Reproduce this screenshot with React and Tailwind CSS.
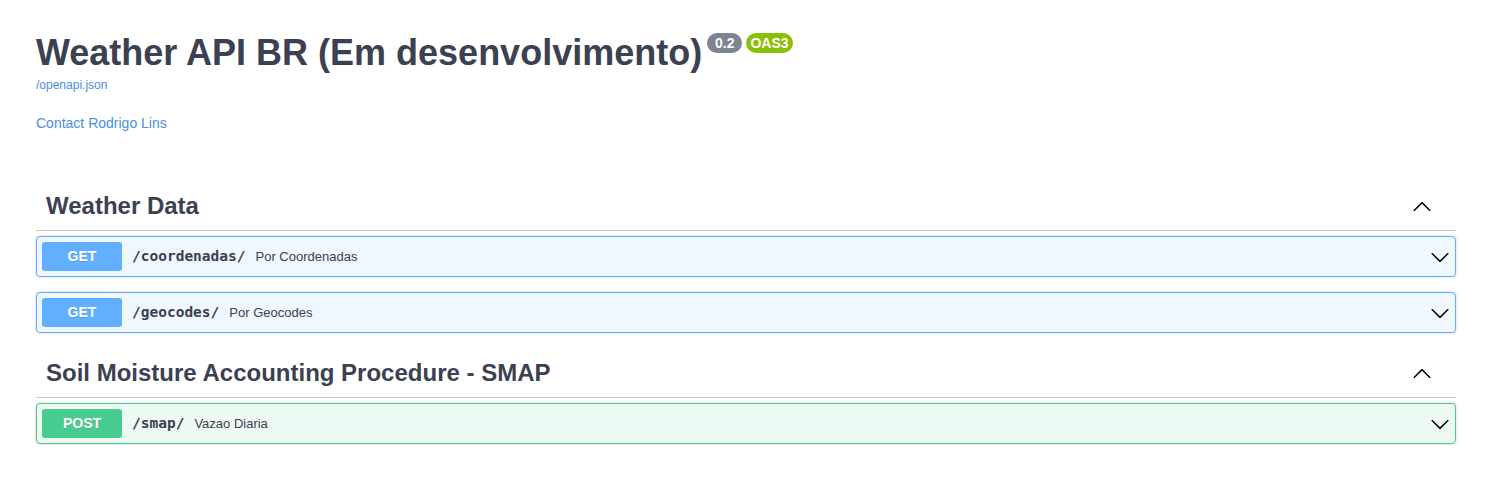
import React from "react";

const ArrowDown = () => (
  <svg width="20" height="20" viewBox="0 0 20 20" className="block" aria-hidden="true">
    <path
      fill="#000"
      d="M17.418 6.109c.272-.268.709-.268.979 0s.271.701 0 .969l-7.908 7.83c-.27.268-.707.268-.979 0l-7.908-7.83c-.27-.268-.27-.701 0-.969.271-.268.709-.268.979 0L10 13.25l7.418-7.141z"
    />
  </svg>
);

const ArrowUp = () => (
  <svg width="20" height="20" viewBox="0 0 20 20" className="block" aria-hidden="true">
    <path
      fill="#000"
      d="M17.418 14.908c.272.268.709.268.979 0s.271-.701 0-.969l-7.908-7.83c-.27-.268-.707-.268-.979 0l-7.908 7.83c-.27.268-.27.701 0 .969.271.268.709.268.979 0L10 7.767l7.418 7.141z"
    />
  </svg>
);

function Tag({ title }) {
  return (
    <div className="flex items-center h-[50px] pl-[10px] pr-[24px] mb-[5px] border-b border-[rgba(59,65,81,0.3)]">
      <h3 className="flex-1 text-[24px] font-bold leading-[30px] text-[#3b4151]">{title}</h3>
      <ArrowUp />
    </div>
  );
}

function Op({ method, path, desc }) {
  const isGet = method === "GET";
  return (
    <div
      className={
        "mb-[15px] rounded-[4px] border shadow-[0_0_3px_rgba(0,0,0,0.19)] " +
        (isGet ? "border-[#61affe] bg-[#eff7ff]" : "border-[#49cc90] bg-[#edfaf4]")
      }
    >
      <div className="flex items-center h-[39px] px-[5px]">
        <span
          className={
            "w-[80px] h-[29px] flex items-center justify-center rounded-[3px] text-white text-[14px] font-bold [text-shadow:0_1px_0_rgba(0,0,0,0.1)] " +
            (isGet ? "bg-[#61affe]" : "bg-[#49cc90]")
          }
        >
          {method}
        </span>
        <span className="px-[10px] font-['DejaVu_Sans_Mono',monospace] font-bold text-[14.5px] text-[#3b4151]">
          {path}
        </span>
        <span className="flex-1 text-[13px] text-[#3b4151]">{desc}</span>
        <ArrowDown />
      </div>
    </div>
  );
}

export default function App() {
  return (
    <div className="min-h-screen bg-white font-['Liberation_Sans',Arial,sans-serif] text-[#3b4151]">
      <div className="pl-[36px] pr-[29px]">
        <div className="pt-[32px]">
          <div className="flex items-start">
            <h2 className="text-[36px] font-bold leading-[41px] text-[#3b4151]">
              Weather API BR (Em desenvolvimento)
            </h2>
            <span className="ml-[5px] mt-[1px] rounded-full bg-[#7d8492] px-[4px] h-[20px] flex items-center whitespace-pre text-[14px] font-bold text-white">
              {" 0.2 "}
            </span>
            <span className="ml-[4px] mt-[1px] rounded-full bg-[#89bf04] px-[4px] h-[20px] flex items-center text-[14px] font-bold text-white">
              OAS3
            </span>
          </div>
          <a className="block mt-[5px] text-[12px] leading-[14px] text-[#4990e2]">/openapi.json</a>
          <a className="block mt-[23px] text-[14px] leading-[16px] text-[#4990e2]">Contact Rodrigo Lins</a>
        </div>
        <div className="mt-[50px]">
          <Tag title="Weather Data" />
          <Op method="GET" path="/coordenadas/" desc="Por Coordenadas" />
          <Op method="GET" path="/geocodes/" desc="Por Geocodes" />
          <Tag title="Soil Moisture Accounting Procedure - SMAP" />
          <Op method="POST" path="/smap/" desc="Vazao Diaria" />
        </div>
      </div>
    </div>
  );
}
